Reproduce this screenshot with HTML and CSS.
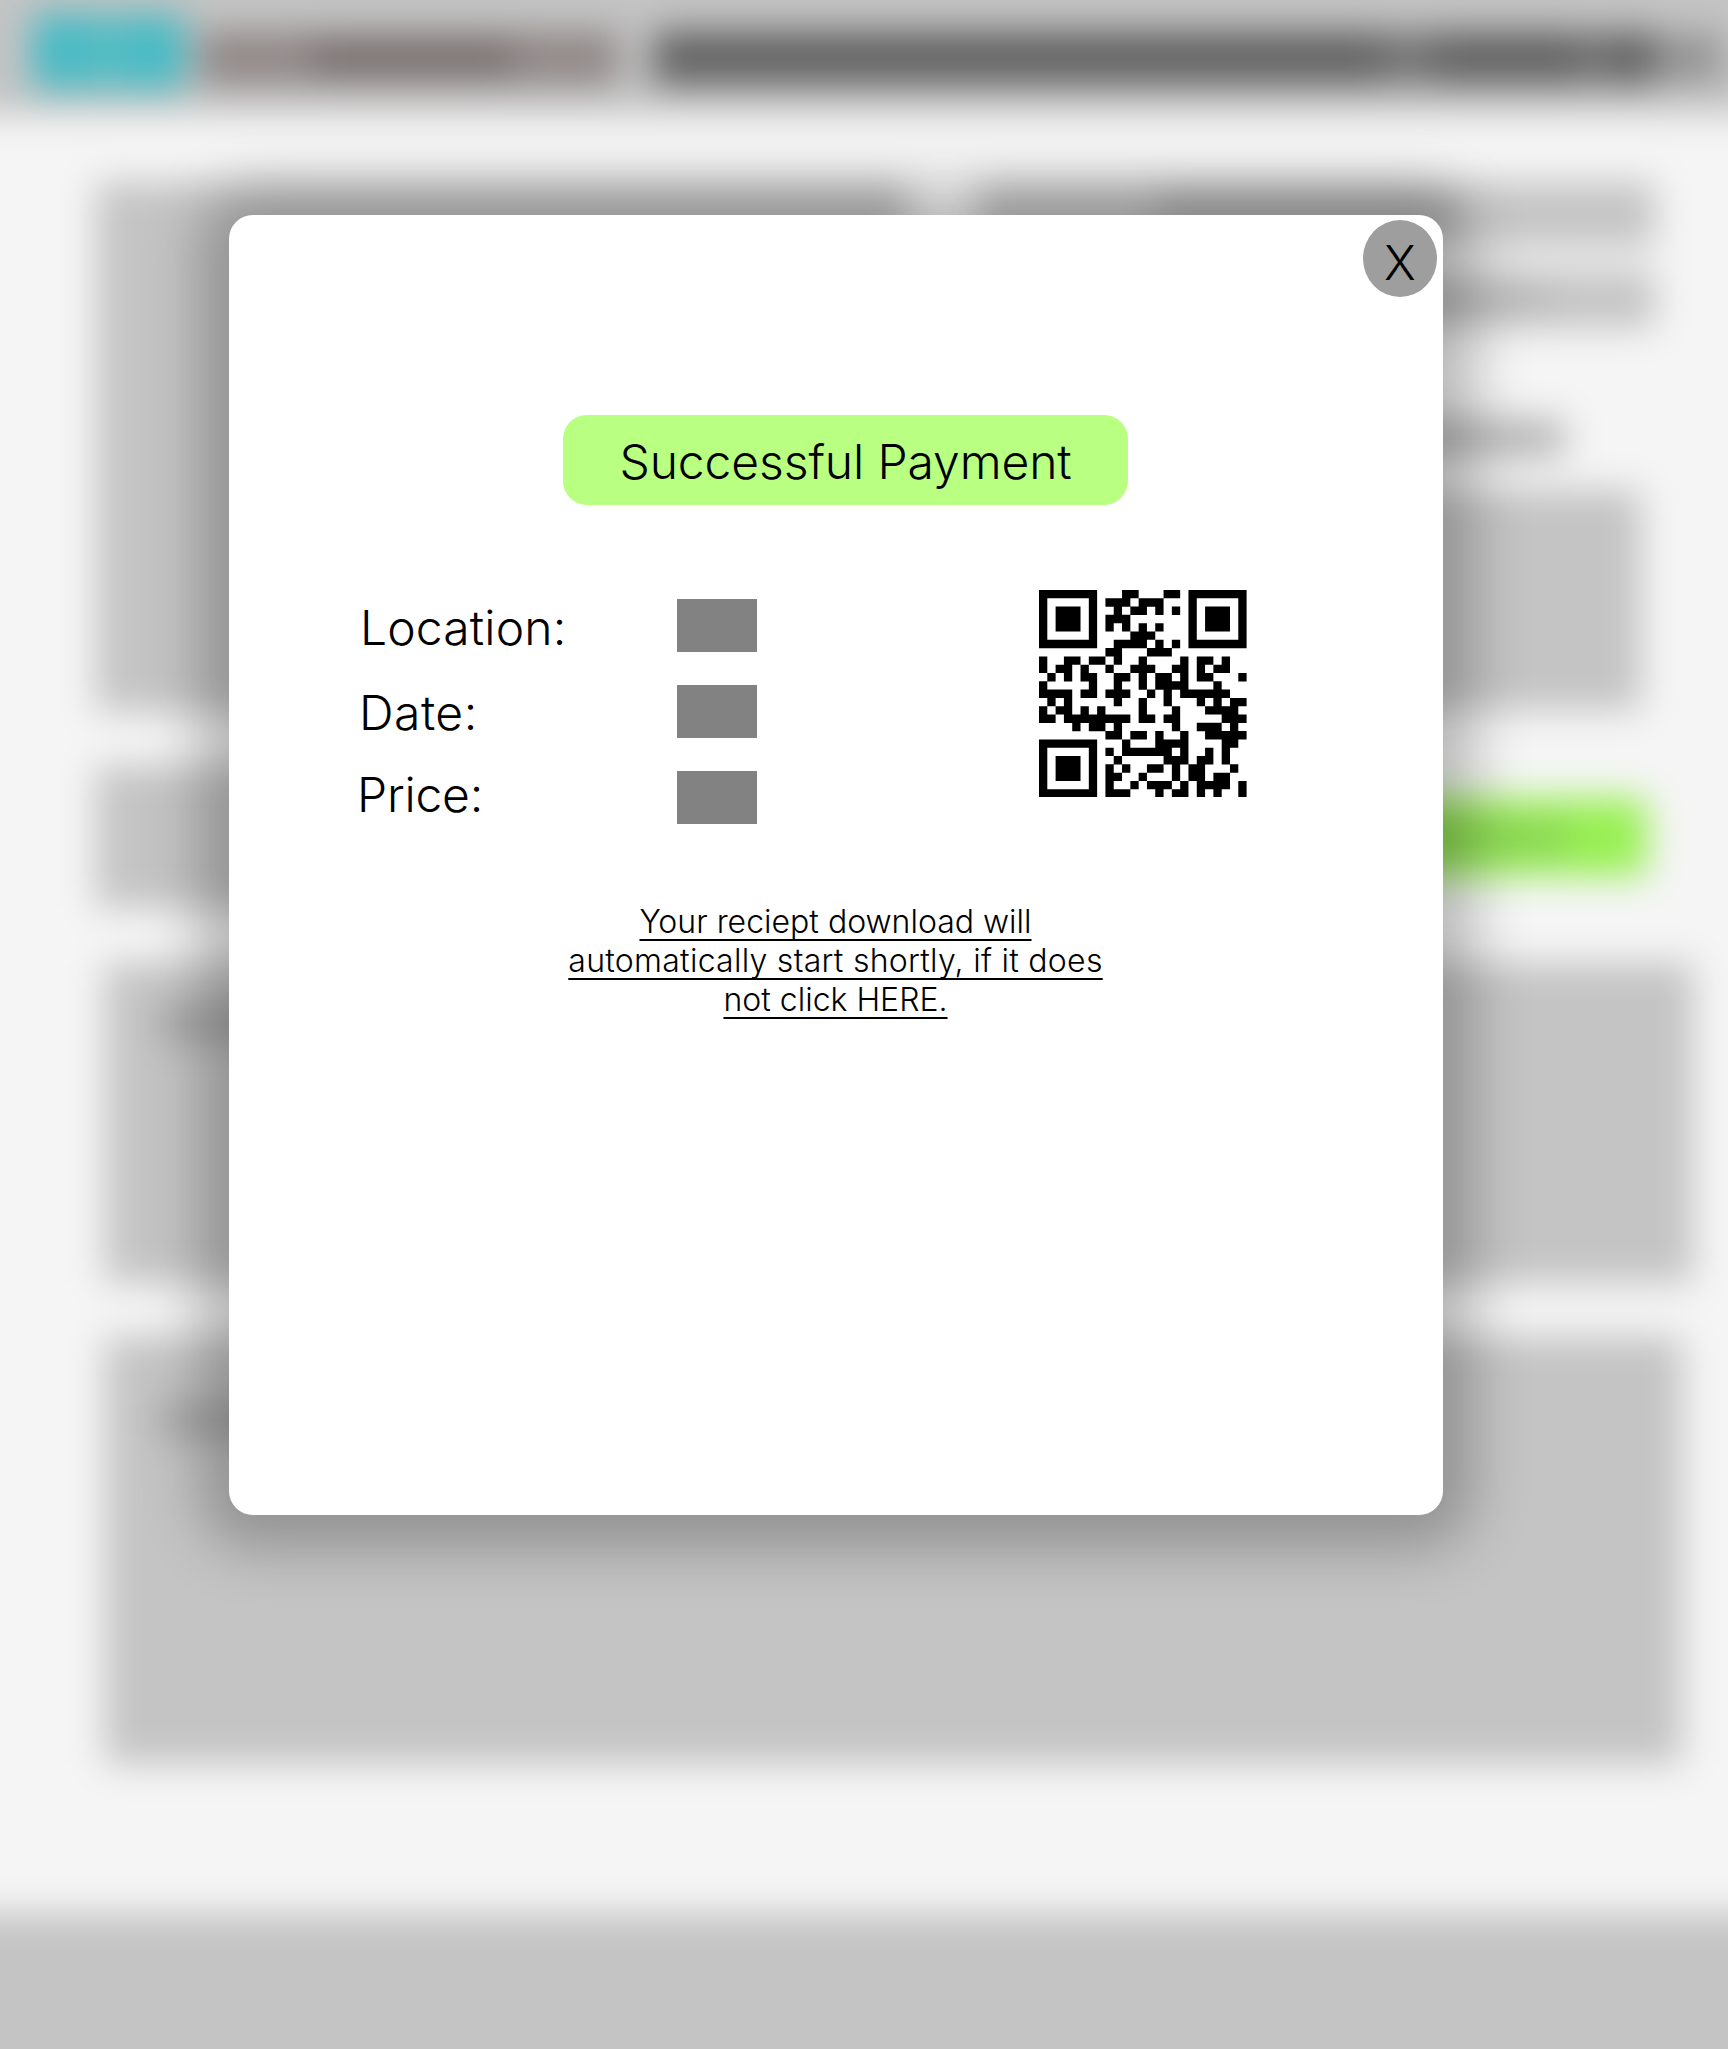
FILE: index.html
```html
<!DOCTYPE html>
<html lang="en">
<head>
<meta charset="utf-8">
<title>Successful Payment</title>
<link rel="stylesheet" href="styles.css">
</head>
<body>
<div class="page">
  <div class="backdrop">
    <header class="topbar">
      <div class="brand"></div>
      <div class="search"><div class="search-text"></div></div>
      <nav class="nav"><span class="nav-a"></span><span class="nav-b"></span><span class="nav-c"></span><span class="nav-d"></span></nav>
      <div class="menu"></div>
    </header>
    <main class="content">
      <div class="columns">
        <div class="left">
          <div class="photo"></div>
          <div class="caption"></div>
        </div>
        <div class="right">
          <div class="field"><div class="field-text"></div></div>
          <div class="field second"><div class="field-text short"></div></div>
          <div class="subtitle"></div>
          <div class="details"></div>
          <div class="pay"><div class="pay-text"></div></div>
        </div>
      </div>
      <section class="panel reviews"><div class="panel-text"></div></section>
      <section class="panel about"><div class="panel-text"></div></section>
    </main>
    <footer class="footer"></footer>
  </div>

  <div class="overlay">
    <div class="modal" role="dialog">
      <button class="close">X</button>
      <h1 class="status">Successful Payment</h1>
      <div class="summary">
        <dl class="facts">
          <dt class="location">Location:</dt><dd></dd>
          <dt class="date">Date:</dt><dd></dd>
          <dt class="price">Price:</dt><dd></dd>
        </dl>
        <svg class="qr" viewBox="0 0 25 25" fill="none" stroke="#000" stroke-width="1.01">
          <path d="M.5 .5h6v6h-6zM18.5 .5h6v6h-6zM.5 18.5h6v6h-6z" stroke-width="1"/>
          <path d="M2 3.5h3M20 3.5h3M2 21.5h3" stroke-width="3"/>
          <path d="M10 .5h2M15 .5h2
            M8 1.5h3M12 1.5h3
            M9 2.5h1M11 2.5h2M14 2.5h1M16 2.5h1
            M8 3.5h3
            M8 4.5h1M10 4.5h1M12 4.5h1M14 4.5h1
            M11 5.5h3
            M9 6.5h4M14 6.5h1M16 6.5h1
            M8 7.5h2M13 7.5h3
            M0 8.5h1M3 8.5h2M6 8.5h2M9 8.5h1M12 8.5h1M17 8.5h1M19 8.5h2M22 8.5h1
            M0 9.5h1M2 9.5h2M5 9.5h1M8 9.5h1M11 9.5h3M16 9.5h2M19 9.5h1M21 9.5h2
            M1 10.5h1M3 10.5h1M5 10.5h2M9 10.5h2M12 10.5h1M14 10.5h2M17 10.5h1M19 10.5h2M24 10.5h1
            M0 11.5h1M6 11.5h1M9 11.5h1M12 11.5h1M14 11.5h4M21 11.5h1
            M0 12.5h4M5 12.5h2M8 12.5h3M13 12.5h1M15 12.5h1M17 12.5h6
            M1 13.5h1M3 13.5h1M9 13.5h1M12 13.5h1M15 13.5h1M19 13.5h1M21 13.5h1M23 13.5h2
            M0 14.5h1M2 14.5h2M5 14.5h1M7 14.5h1M12 14.5h1M16 14.5h1M20 14.5h4
            M0 15.5h2M3 15.5h8M12 15.5h2M15 15.5h2M22 15.5h3
            M4 16.5h1M6 16.5h2M9 16.5h1M16 16.5h1M19 16.5h3M23 16.5h1
            M8 17.5h2M11 17.5h2M14 17.5h1M17 17.5h1M20 17.5h5
            M10 18.5h1M14 18.5h4M22 18.5h2
            M8 19.5h1M10 19.5h6M17 19.5h1M20 19.5h1M22 19.5h1
            M9 20.5h1M15 20.5h3M19 20.5h2M22 20.5h1
            M8 21.5h1M10 21.5h1M13 21.5h2M16 21.5h1M18 21.5h2M23 21.5h1
            M8 22.5h2M12 22.5h1M16 22.5h1M18 22.5h2M21 22.5h2
            M8 23.5h1M11 23.5h1M13 23.5h3M17 23.5h1M19 23.5h4M24 23.5h1
            M8 24.5h3M14 24.5h1M16 24.5h2M19 24.5h1M21 24.5h1M24 24.5h1"/>
        </svg>
      </div>
      <a class="receipt">Your reciept download will<br><span class="wide">automatically start shortly, if it does</span><br>not click HERE.</a>
    </div>
  </div>
</div>
</body>
</html>
```
FILE: styles.css
```css
* { box-sizing: border-box; }

body {
  margin: 0;
  font-family: Inter, "Liberation Sans", sans-serif;
  font-weight: 300;
  color: #000;
}

.page {
  position: relative;
  display: flex;
  width: 1728px;
  height: 2049px;
  overflow: hidden;
  background: #f4f4f4;
}

/* Page behind the dialog; it bleeds 60px past every edge so the blur stays even */
.backdrop {
  flex: none;
  width: 1848px;
  height: 2169px;
  margin: -60px;
  display: flex;
  flex-direction: column;
  background: #f5f5f5;
  filter: blur(18px);
}

.topbar {
  height: 174px;
  flex: none;
  background: #c4c4c4;
  display: flex;
  align-items: flex-start;
  padding: 74px 0 0 92px;
}

.brand {
  width: 153px;
  height: 76px;
  border-radius: 8px;
  background: linear-gradient(90deg, #48bac4 25%, #58bdc3 50%, #48bac4 75%);
}

.search {
  width: 420px;
  height: 54px;
  margin: 17px 0 0 14px;
  padding: 11px 0 0 114px;
  background: #908887;
}

.search-text { width: 200px; height: 32px; background: #756d6c; }

.nav {
  display: flex;
  width: 1001px;
  height: 54px;
  margin: 17px 0 0 34px;
  background: #636363;
}

.nav span { height: 54px; }
.nav-a { width: 728px; }
.nav-b { width: 54px; background: #747474; }
.nav-c { width: 142px; }
.nav-d { width: 34px; background: #727272; }

.menu { width: 68px; height: 48px; margin-top: 20px; background: #929292; }

.content { flex: 1; padding: 68px 0 0 60px; }

.columns { display: flex; gap: 70px; padding-left: 96px; height: 781px; }

.left { width: 812px; }
.photo { height: 530px; background: #c4c4c4; }
.caption { height: 142px; margin-top: 54px; background: #c4c4c4; }

.right { width: 677px; }
.field { height: 65px; padding: 8px 0 0 180px; background: #c4c4c4; }
.field.second { margin-top: 24px; height: 57px; }
.field-text { width: 300px; height: 44px; background: #adadad; }
.field-text.short { width: 390px; height: 36px; background: #b8b8b8; }
.subtitle { width: 586px; height: 38px; margin-top: 91px; background: #b4b4b4; }
.details { width: 663px; height: 220px; margin-top: 33px; background: #c4c4c4; }
.pay { width: 669px; height: 78px; margin-top: 88px; padding-top: 22px; background: #98f052; }
.pay-text { width: 590px; height: 36px; background: #8ad356; }

.panel { margin-left: 105px; padding: 44px 0 0 56px; background: #c4c4c4; }
.panel-text { width: 300px; height: 34px; background: #a2a2a2; }
.reviews { width: 1588px; height: 320px; }
.about { width: 1577px; height: 427px; margin-top: 54px; padding-top: 66px; }

.footer { height: 196px; flex: none; background: #c4c4c4; }

/* Dialog */
.overlay {
  position: absolute;
  inset: 0;
  padding: 215px 0 0 229px;
}

.modal {
  position: relative;
  width: 1214px;
  height: 1300px;
  padding-top: 200px;
  border-radius: 24px;
  background: #fff;
  box-shadow: 0 4px 56px 30px rgba(0, 0, 0, .25);
}

.close {
  position: absolute;
  top: 5px;
  right: 6px;
  width: 74px;
  height: 77px;
  padding: 8px 0 0;
  border: 0;
  border-radius: 50%;
  background: #9e9e9e;
  color: #000;
  font: 300 48px/58px Inter, "Liberation Sans", sans-serif;
}

.status {
  width: 565px;
  height: 90px;
  margin: 0 0 0 334px;
  padding-top: 18px;
  border-radius: 24px;
  background: #b9ff82;
  font-size: 48px;
  font-weight: 300;
  line-height: 58px;
  letter-spacing: -.1px;
  text-align: center;
}

.summary { display: flex; margin-top: 84.7px; padding-left: 128px; }

.facts {
  display: grid;
  grid-template-columns: 320px 80px;
  grid-auto-rows: 53px;
  row-gap: 33px;
  width: 682px;
  height: 235px;
  margin: 9.3px 0 0;
  font-size: 48px;
  line-height: 58px;
}

.facts dd { margin: 0; background: #828282; }
.location { padding-left: 3px; letter-spacing: .15px; }
.date { margin-top: -1px; padding-left: 2px; letter-spacing: .5px; }
.price { margin-top: -5px; letter-spacing: -.2px; }

.qr { width: 207.6px; height: 207.6px; }

.receipt {
  display: block;
  width: 601px;
  margin: 68px 0 0 306px;
  font-size: 32px;
  line-height: 39px;
  text-align: center;
  text-decoration: underline;
  text-decoration-thickness: 2.4px;
  text-underline-offset: 6px;
  text-decoration-skip-ink: none;
}

.wide { letter-spacing: .27px; }
```
